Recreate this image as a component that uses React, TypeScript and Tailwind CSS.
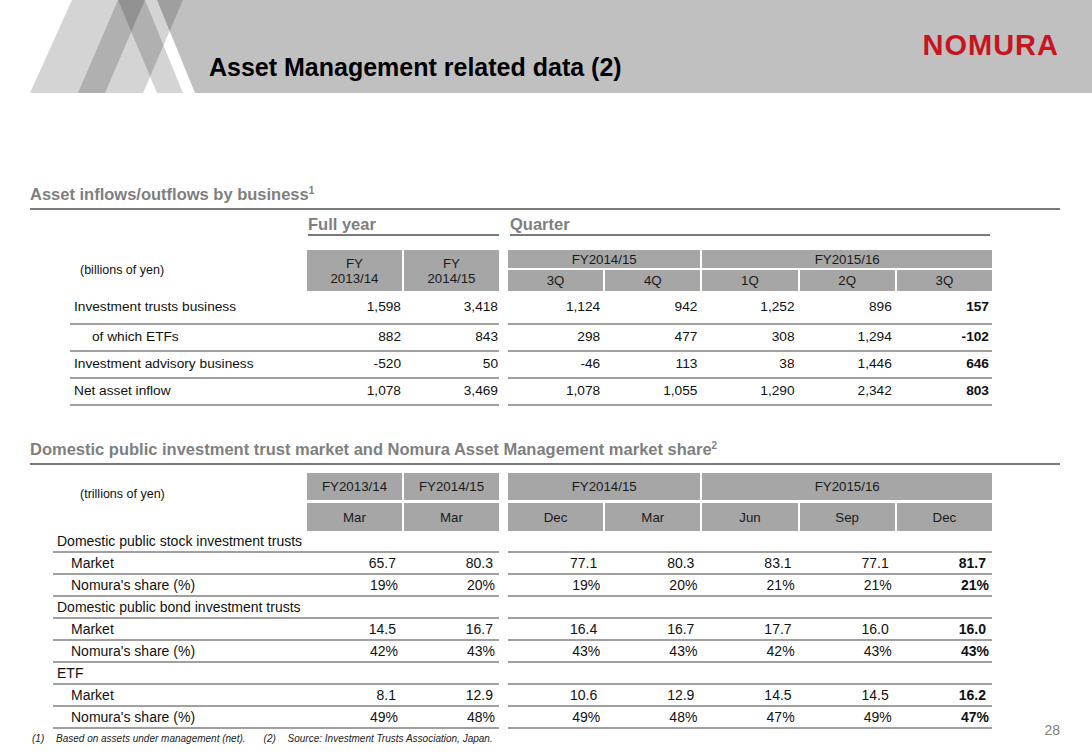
import React from 'react';

// Header decoration: gray title band plus the three translucent slanted bars
const HeaderArt: React.FC = () => (
  <svg className="absolute inset-0" width="1092" height="93" viewBox="0 0 1092 93">
    <polygon points="157,0 1092,0 1092,93 195,93" fill="#c0c0c0" />
    <polygon points="30,93 105,93 145,0 72,0" fill="#000" fillOpacity="0.17" />
    <polygon points="78,93 143,93 183,0 118,0" fill="#000" fillOpacity="0.17" />
    <polygon points="118,0 145,0 183,93 157,93" fill="#000" fillOpacity="0.17" />
  </svg>
);

type FlowRow = { label: string; indent?: boolean; fy: string[]; q: string[] };

const flows: FlowRow[] = [
  { label: 'Investment trusts business', fy: ['1,598', '3,418'], q: ['1,124', '942', '1,252', '896', '157'] },
  { label: 'of which ETFs', indent: true, fy: ['882', '843'], q: ['298', '477', '308', '1,294', '-102'] },
  { label: 'Investment advisory business', fy: ['-520', '50'], q: ['-46', '113', '38', '1,446', '646'] },
  { label: 'Net asset inflow', fy: ['1,078', '3,469'], q: ['1,078', '1,055', '1,290', '2,342', '803'] },
];

type ShareRow = { label: string; cat?: boolean; pct?: boolean; fy?: string[]; q?: string[] };

const shares: ShareRow[] = [
  { label: 'Domestic public stock investment trusts', cat: true },
  { label: 'Market', fy: ['65.7', '80.3'], q: ['77.1', '80.3', '83.1', '77.1', '81.7'] },
  { label: "Nomura's share (%)", pct: true, fy: ['19%', '20%'], q: ['19%', '20%', '21%', '21%', '21%'] },
  { label: 'Domestic public bond investment trusts', cat: true },
  { label: 'Market', fy: ['14.5', '16.7'], q: ['16.4', '16.7', '17.7', '16.0', '16.0'] },
  { label: "Nomura's share (%)", pct: true, fy: ['42%', '43%'], q: ['43%', '43%', '42%', '43%', '43%'] },
  { label: 'ETF', cat: true },
  { label: 'Market', fy: ['8.1', '12.9'], q: ['10.6', '12.9', '14.5', '14.5', '16.2'] },
  { label: "Nomura's share (%)", pct: true, fy: ['49%', '48%'], q: ['49%', '48%', '47%', '49%', '47%'] },
];

const Cell: React.FC<{ children?: React.ReactNode; className?: string }> = ({ children, className = '' }) => (
  <div className={`bg-[#a6a6a6] flex items-center justify-center text-center text-[13.3px] leading-[15px] text-[#1a1a1a] ${className}`}>
    {children}
  </div>
);

const SectionTitle: React.FC<{ text: string; sup: string; className?: string }> = ({ text, sup, className = '' }) => (
  <div className={className}>
    <div className="h-[20px] leading-[20px] text-[16.5px] font-bold text-[#7f7f7f]">
      {text}
      <sup className="text-[10px] -top-[6px]">{sup}</sup>
    </div>
    <div className="mt-[4px] border-t-2 border-[#7a7a7a]" />
  </div>
);

export default function App() {
  return (
    <div className="w-[1092px] h-[756px] overflow-hidden bg-white font-['Liberation_Sans',Arial,sans-serif] text-[#111]">
      {/* title band */}
      <header className="relative h-[93px]">
        <HeaderArt />
        <div className="relative flex items-start h-full">
          <h1 className="mt-[52px] ml-[209px] text-[25px] leading-[30px] font-bold text-black">
            Asset Management related data (2)
          </h1>
          <div className="ml-auto mr-[33px] mt-[31px] text-[29px] leading-[29px] font-bold tracking-[1px] text-[#c8141e]">
            NOMURA
          </div>
        </div>
      </header>

      <div className="px-[30px] pr-[32px]">
        <SectionTitle className="mt-[91px]" text="Asset inflows/outflows by business" sup="1" />

        {/* asset flows table */}
        <div className="ml-[40px] w-[922px]">
          <div className="mt-[4px] flex">
            <div className="w-[237px]" />
            <div className="ml-[1px] w-[191px] h-[22px] border-b-2 border-[#7a7a7a] text-[16.5px] leading-[20px] font-bold text-[#7f7f7f]">
              Full year
            </div>
            <div className="ml-[11px] w-[480px] h-[22px] border-b-2 border-[#7a7a7a] text-[16.5px] leading-[20px] font-bold text-[#7f7f7f]">
              Quarter
            </div>
          </div>

          <div className="mt-[14px] flex gap-[9px]">
            <div className="w-[429px] flex gap-[2px]">
              <div className="flex-1 flex items-center pl-[10px] text-[12.5px]">(billions of yen)</div>
              <Cell className="w-[95px] h-[41px] flex-col">
                <span>FY</span>
                <span>2013/14</span>
              </Cell>
              <Cell className="w-[95px] h-[41px] flex-col">
                <span>FY</span>
                <span>2014/15</span>
              </Cell>
            </div>
            <div className="w-[484px] flex flex-col gap-[2px]">
              <div className="grid grid-cols-5 gap-[2px] h-[18px]">
                <Cell className="col-span-2">FY2014/15</Cell>
                <Cell className="col-span-3">FY2015/16</Cell>
              </div>
              <div className="grid grid-cols-5 gap-[2px] h-[21px]">
                {['3Q', '4Q', '1Q', '2Q', '3Q'].map((q, i) => (
                  <Cell key={i}>{q}</Cell>
                ))}
              </div>
            </div>
          </div>

          {flows.map((r, i) => (
            <div key={i} className={`flex gap-[9px] text-[13.7px] ${i === 0 ? 'h-[34px]' : 'h-[27px]'}`}>
              <div className="w-[429px] flex gap-[2px] items-center border-b-2 border-[#a0a0a0]">
                <div className={`flex-1 ${r.indent ? 'pl-[22px]' : 'pl-[4px]'}`}>{r.label}</div>
                {r.fy.map((v, j) => (
                  <div key={j} className="w-[95px] text-right pr-[1px]">{v}</div>
                ))}
              </div>
              <div className="w-[484px] grid grid-cols-5 gap-[2px] items-center border-b-2 border-[#a0a0a0]">
                {r.q.map((v, j) => (
                  <div key={j} className={`text-right pr-[3px] ${j === 4 ? 'font-bold' : ''}`}>{v}</div>
                ))}
              </div>
            </div>
          ))}
        </div>

        <SectionTitle
          className="mt-[33px]"
          text="Domestic public investment trust market and Nomura Asset Management market share"
          sup="2"
        />

        {/* market share table */}
        <div className="ml-[23px] w-[939px]">
          <div className="mt-[8px] flex gap-[9px]">
            <div className="w-[446px] flex gap-[2px]">
              <div className="flex-1 pl-[27px] pt-[13px] text-[12.5px] leading-[16px]">(trillions of yen)</div>
              {['FY2013/14', 'FY2014/15'].map((h) => (
                <div key={h} className="w-[95px] flex flex-col gap-[3px]">
                  <Cell className="h-[27px]">{h}</Cell>
                  <Cell className="h-[28px]">Mar</Cell>
                </div>
              ))}
            </div>
            <div className="w-[484px] flex flex-col gap-[3px]">
              <div className="grid grid-cols-5 gap-[2px] h-[27px]">
                <Cell className="col-span-2">FY2014/15</Cell>
                <Cell className="col-span-3">FY2015/16</Cell>
              </div>
              <div className="grid grid-cols-5 gap-[2px] h-[28px]">
                {['Dec', 'Mar', 'Jun', 'Sep', 'Dec'].map((m, i) => (
                  <Cell key={i}>{m}</Cell>
                ))}
              </div>
            </div>
          </div>

          {shares.map((r, i) => (
            <div key={i} className="flex gap-[9px] h-[22px] text-[14px]">
              <div className="w-[446px] flex gap-[2px] items-center border-b-2 border-[#a0a0a0]">
                <div className={`flex-1 ${r.cat ? 'pl-[4px]' : 'pl-[18px]'}`}>{r.label}</div>
                {r.fy?.map((v, j) => (
                  <div key={j} className={`w-[95px] text-right ${r.pct ? 'pr-[4px]' : 'pr-[6px]'}`}>{v}</div>
                ))}
              </div>
              <div className="w-[484px] grid grid-cols-5 gap-[2px] items-center border-b-2 border-[#a0a0a0]">
                {r.q?.map((v, j) => (
                  <div key={j} className={`text-right ${r.pct ? 'pr-[3px]' : 'pr-[6px]'} ${j === 4 ? 'font-bold' : ''}`}>{v}</div>
                ))}
              </div>
            </div>
          ))}
        </div>

        {/* footnotes and page number */}
        <div className="mt-[3px] flex items-start text-[10px] leading-[14px] italic text-[#222]">
          <span className="ml-[2px] w-[24px]">(1)</span>
          <span>Based on assets under management (net).</span>
          <span className="ml-[18px] w-[24px]">(2)</span>
          <span>Source: Investment Trusts Association, Japan.</span>
          <span className="ml-auto -mt-[10px] text-[14px] leading-[16px] not-italic text-[#7f7f7f]">28</span>
        </div>
      </div>
    </div>
  );
}
